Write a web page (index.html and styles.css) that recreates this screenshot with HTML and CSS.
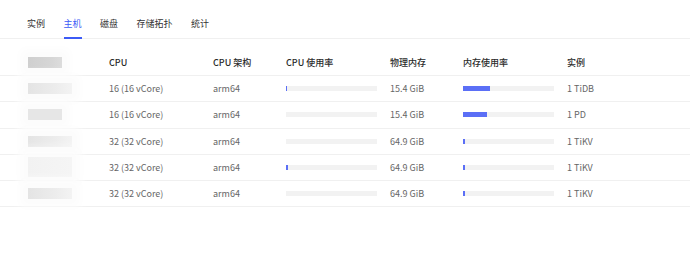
FILE: index.html
```html
<html lang="zh-CN">
<head>
    <meta charset="UTF-8">
    <title>主机</title>
    <link rel="stylesheet" href="styles.css">
</head>
<body>
    <div class="tabs">
        <div class="tab">实例</div>
        <div class="tab active">主机</div>
        <div class="tab">磁盘</div>
        <div class="tab">存储拓扑</div>
        <div class="tab">统计</div>
    </div>

    <div class="hosts">
        <div class="row head">
            <div><span class="masked dark"></span></div>
            <div>CPU</div>
            <div>CPU 架构</div>
            <div>CPU 使用率</div>
            <div>物理内存</div>
            <div>内存使用率</div>
            <div>实例</div>
        </div>
        <div class="row">
            <div><span class="masked"></span></div>
            <div>16 (16 vCore)</div>
            <div>arm64</div>
            <div><div class="bar"><div class="fill" style="width: 1px"></div></div></div>
            <div>15.4 GiB</div>
            <div><div class="bar"><div class="fill" style="width: 30%"></div></div></div>
            <div>1 TiDB</div>
        </div>
        <div class="row">
            <div><span class="masked dark short"></span></div>
            <div>16 (16 vCore)</div>
            <div>arm64</div>
            <div><div class="bar"><div class="fill" style="width: 0"></div></div></div>
            <div>15.4 GiB</div>
            <div><div class="bar"><div class="fill" style="width: 26%"></div></div></div>
            <div>1 PD</div>
        </div>
        <div class="row">
            <div><span class="masked"></span></div>
            <div>32 (32 vCore)</div>
            <div>arm64</div>
            <div><div class="bar"><div class="fill" style="width: 0"></div></div></div>
            <div>64.9 GiB</div>
            <div><div class="bar"><div class="fill" style="width: 2%"></div></div></div>
            <div>1 TiKV</div>
        </div>
        <div class="row">
            <div><span class="masked light"></span></div>
            <div>32 (32 vCore)</div>
            <div>arm64</div>
            <div><div class="bar"><div class="fill" style="width: 2px"></div></div></div>
            <div>64.9 GiB</div>
            <div><div class="bar"><div class="fill" style="width: 2%"></div></div></div>
            <div>1 TiKV</div>
        </div>
        <div class="row">
            <div><span class="masked"></span></div>
            <div>32 (32 vCore)</div>
            <div>arm64</div>
            <div><div class="bar"><div class="fill" style="width: 0"></div></div></div>
            <div>64.9 GiB</div>
            <div><div class="bar"><div class="fill" style="width: 2%"></div></div></div>
            <div>1 TiKV</div>
        </div>
    </div>
</body>
</html>
```

FILE: styles.css
```css
body {
    margin: 0;
    background-color: #fff;
    font-family: "Noto Sans CJK SC", "Noto Sans", sans-serif;
    font-size: 9px;
    color: #666;
}
.tabs {
    display: flex;
    gap: 18.5px;
    padding: 0 0 0 27px;
    height: 38px;
    border-bottom: 1px solid #f0f0f0;
}
.tab {
    display: flex;
    align-items: center;
    padding-top: 10px;
    color: #333;
    border-bottom: 2px solid transparent;
    margin-bottom: -1px;
}
.tab.active {
    color: #3c5bf6;
    border-bottom-color: #3c5bf6;
}
.hosts {
    margin-top: 11px;
}
.row {
    display: grid;
    grid-template-columns: 81px 104px 73px 104px 73px 104px 1fr;
    align-items: center;
    height: 25.25px;
    padding-left: 28px;
    border-bottom: 1px solid #f0f0f0;
}
.row.head {
    height: 25px;
    color: #2b2b2b;
    font-weight: 500;
}
.masked {
    display: block;
    width: 44px;
    height: 11px;
    background: linear-gradient(90deg, #e4e4e4, #ececec 60%, #f3f3f3);
    box-shadow: 0 0 10px 8px #fcfcfc;
}
.masked.dark {
    width: 34px;
    background: linear-gradient(90deg, #cfcfcf, #d6d6d6 70%, #dcdcdc);
}
.masked.short {
    width: 34px;
    background: #e6e6e6;
}
.masked.light {
    height: 20px;
    background: linear-gradient(90deg, #f2f2f2, #f5f5f5);
}
.bar {
    width: 91px;
    height: 5px;
    background-color: #f2f2f2;
}
.fill {
    height: 100%;
    background-color: #5b6ff6;
}
```
